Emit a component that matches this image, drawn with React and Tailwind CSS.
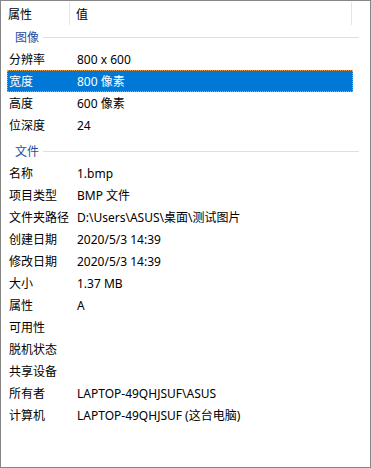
const imageRows = [
  ['分辨率', '800 x 600'],
  ['宽度', '800 像素', true],
  ['高度', '600 像素'],
  ['位深度', '24'],
];

const fileRows = [
  ['名称', '1.bmp'],
  ['项目类型', 'BMP 文件'],
  ['文件夹路径', 'D:\\Users\\ASUS\\桌面\\测试图片'],
  ['创建日期', '2020/5/3 14:39'],
  ['修改日期', '2020/5/3 14:39'],
  ['大小', '1.37 MB'],
  ['属性', 'A'],
  ['可用性', ''],
  ['脱机状态', ''],
  ['共享设备', ''],
  ['所有者', 'LAPTOP-49QHJSUF\\ASUS'],
  ['计算机', 'LAPTOP-49QHJSUF (这台电脑)'],
];

function Group({ title, className = '' }) {
  return (
    <div className={`flex items-center h-[22px] pl-[14px] pr-[11px] ${className}`}>
      <span className="text-[#1e4ea0] leading-none pt-[2px]">{title}</span>
      <div className="flex-1 h-px bg-[#d8dff0] ml-[4px]" />
    </div>
  );
}

function Row({ label, value, selected }) {
  return (
    <div
      className={`flex items-center h-[22px] mr-[17px] ml-[6px] pl-[2px] pt-[2px] ${
        selected ? 'bg-[#0078d7] text-white outline outline-1 outline-dotted outline-[#e9a04c] -outline-offset-1' : 'text-black'
      }`}
    >
      <span className="w-[68px] shrink-0 whitespace-nowrap">{label}</span>
      <span className="whitespace-nowrap">{value}</span>
    </div>
  );
}

export default function App() {
  return (
    <div
      className="w-[371px] h-[468px] bg-white border border-[#868686] text-[12px] overflow-hidden"
      style={{ fontFamily: '"Noto Sans", "Noto Sans CJK SC", sans-serif' }}
    >
      <div className="flex items-center h-[25px]">
        <span className="w-[68px] pl-[7px] pt-[2px]">属性</span>
        <div className="w-px h-[23px] bg-[#e5e5e5]" />
        <span className="flex-1 pl-[6px] pt-[2px]">值</span>
        <div className="w-px h-[23px] bg-[#e5e5e5] mr-[18px]" />
      </div>
      <Group title="图像" />
      {imageRows.map(([l, v, s]) => (
        <Row key={l} label={l} value={v} selected={s} />
      ))}
      <Group title="文件" className="mt-[4px]" />
      {fileRows.map(([l, v]) => (
        <Row key={l} label={l} value={v} />
      ))}
    </div>
  );
}
